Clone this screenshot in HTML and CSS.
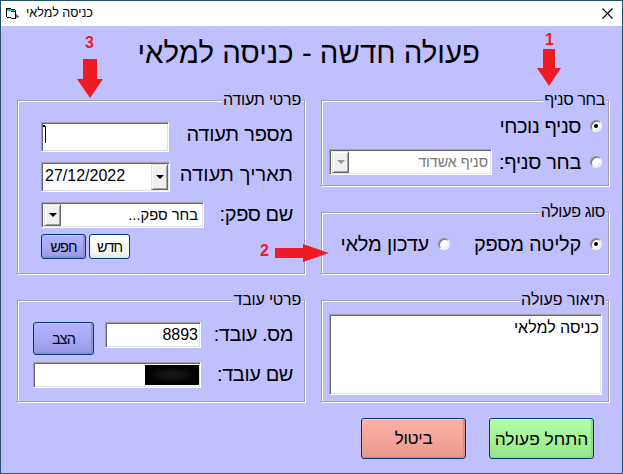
FILE: index.html
```html
<!DOCTYPE html>
<html lang="he">
<head>
<meta charset="utf-8">
<title>כניסה למלאי</title>
<link rel="stylesheet" href="styles.css">
</head>
<body>
<div class="window">
  <header class="titlebar">
    <svg class="app-icon" width="13" height="12" viewBox="0 0 13 12" shape-rendering="crispEdges">
      <path d="M0 0h5v1h4v1h1v9H5v-1H1V9H0z" fill="#000"/>
      <path d="M1 3h4v1h4v6H5V9H1z" fill="#fff"/>
      <path d="M1 1h4v1h4v1H5V3H1z" fill="#00d0d8"/>
      <path d="M10 6h1v1h1v1h1v1h-1v1h-2z" fill="#777"/>
    </svg>
    <span class="caption">כניסה למלאי</span>
    <svg class="close" width="11" height="11" viewBox="0 0 11 11"><path d="M.5 .5l10 10M10.500 .5l-10 10" stroke="#000" stroke-width="1.100"/></svg>
  </header>
  <main>
    <h1>פעולה חדשה - כניסה למלאי</h1>
    <div class="columns">
      <div class="column">
        <fieldset class="panel document">
          <div class="legend">פרטי תעודה</div>
          <div class="row tall"><div class="box number"><svg width="4" height="19" viewBox="0 0 4 19" shape-rendering="crispEdges"><path d="M0 0h2v1h1v17H2V2H0z"/></svg></div><label class="l-num">מספר תעודה</label></div>
          <div class="row tall"><div class="box date"><span>27/12/2022</span><b class="drop"></b></div><label class="l-date">תאריך תעודה</label></div>
          <div class="row"><div class="box supplier"><b class="drop"></b><span dir="rtl">בחר ספק...</span></div><label class="l-sup">שם ספק:</label></div>
          <div class="buttons"><button class="blue search">חפש</button><button class="light">חדש</button></div>
        </fieldset>
        <fieldset class="panel employee">
          <div class="legend">פרטי עובד</div>
          <div class="row emp"><button class="blue set">הצב</button><div class="box id"><span>8893</span></div><label class="l-id">מס. עובד:</label></div>
          <div class="row name-row"><div class="box name"><i class="redacted"></i></div><label class="l-name">שם עובד:</label></div>
        </fieldset>
      </div>
      <div class="column">
        <fieldset class="panel branch">
          <div class="legend l-branch">בחר סניף</div>
          <div class="opt"><label class="l-cur">סניף נוכחי</label><i class="radio on"></i></div>
          <div class="opt second"><div class="box disabled"><b class="drop"></b><span dir="rtl">סניף אשדוד</span></div><label class="l-pick">בחר סניף:</label><i class="radio"></i></div>
        </fieldset>
        <fieldset class="panel kind">
          <div class="legend l-kind">סוג פעולה</div>
          <div class="opt"><label>עדכון מלאי</label><i class="radio"></i><label class="l-recv">קליטה מספק</label><i class="radio on"></i></div>
        </fieldset>
        <fieldset class="panel about">
          <div class="legend l-about">תיאור פעולה</div>
          <div class="box memo" dir="rtl">כניסה למלאי</div>
        </fieldset>
      </div>
    </div>
    <footer><button class="big red">ביטול</button><button class="big green">התחל פעולה</button></footer>
  </main>
  <div class="note n1">1</div>
  <div class="note n2">2</div>
  <div class="note n3">3</div>
  <svg class="arrow a1" width="24" height="37" viewBox="0 0 24 37"><path d="M6 0h12v19h6L12 37 0 19h6z"/></svg>
  <svg class="arrow a2" width="54" height="18" viewBox="0 0 54 18"><path d="M0 4h28V0l26 9-26 9v-4H0z"/></svg>
  <svg class="arrow a3" width="26" height="39" viewBox="0 0 26 39"><path d="M6 0h14v20h6L13 39 0 20h6z"/></svg>
</div>
</body>
</html>
```
FILE: styles.css
```css
* { box-sizing: border-box; }
body { margin: 0; font-family: "Liberation Sans", sans-serif; color: #000; }
.window {
  position: relative;
  width: 623px;
  height: 474px;
  border: 1px solid #24506c;
  border-bottom-color: #48486a;
  background: #c0c0ff;
  overflow: hidden;
}
.titlebar { display: flex; height: 25px; background: #fff; padding: 0 9px 0 5px; }
.app-icon { margin-top: 7px; }
.caption { margin-left: 7px; font-size: 12.600px; line-height: 24px; direction: rtl; }
.close { margin: 7px 0 0 auto; }
h1 {
  height: 74px;
  margin: 0;
  padding: 9px 142px 0 0;
  font-size: 29.400px;
  font-weight: 400;
  line-height: 36px;
  direction: rtl;
  white-space: nowrap;
}
.columns { display: flex; gap: 16px; padding-left: 16px; }
.column { width: 288px; }
.panel {
  display: flex;
  flex-direction: column;
  min-width: 0;
  margin: 0;
  padding: 0;
  border: 1px solid #a0a0a0;
  box-shadow: 1px 1px 0 #fff, inset 1px 1px 0 #fff;
}
.document { height: 174px; margin-bottom: 26px; }
.employee, .about { height: 102px; }
.branch { height: 86px; margin-bottom: 26px; }
.kind { height: 62px; margin-bottom: 26px; }
.legend {
  align-self: flex-end;
  height: 16px;
  margin: -9px 2px 0 0;
  padding: 0 1px;
  font-size: 16px;
  line-height: 16px;
  letter-spacing: -.2px;
  direction: rtl;
  white-space: nowrap;
  background: #c0c0ff;
}
.l-branch, .l-kind { letter-spacing: -.35px; }
.l-about { letter-spacing: 0; }
label { font-size: 20px; line-height: 22px; letter-spacing: -.2px; direction: rtl; white-space: nowrap; }
.row { display: flex; justify-content: space-between; align-items: center; height: 26px; margin: 0 11px 0 23px; }
.row label { padding-bottom: 2px; }
.row.tall { height: 30px; margin-bottom: 10px; }
.row.tall label { padding-bottom: 6px; }
.document .legend { margin-bottom: 14px; }
.l-date { letter-spacing: .15px; }
.l-sup { letter-spacing: -.4px; }
.l-id { letter-spacing: -.45px; }
.l-name, .l-cur { letter-spacing: -.4px; }
.l-pick { letter-spacing: -.35px; }
.box {
  display: flex;
  border: 1px solid;
  border-color: #a0a0a0 #fff #fff #a0a0a0;
  box-shadow: inset 1px 1px 0 #696969, inset -1px -1px 0 #e3e3e3;
  background: #fff;
  padding: 2px;
  font-size: 16px;
  white-space: nowrap;
}
.number { width: 128px; height: 30px; padding: 2px 1px; }
.date { width: 129px; height: 30px; padding: 1px; justify-content: space-between; line-height: 22px; }
.date span { padding: 1px 0 0 2px; }
.supplier, .disabled { width: 163px; height: 26px; padding: 1px; justify-content: space-between; font-size: 14.700px; line-height: 22px; }
.disabled { margin-right: 7px; font-size: 14.300px; color: #777; }
.supplier span { padding-right: 4px; }
.disabled span { padding-right: 2px; }
.drop {
  width: 17px;
  display: grid;
  place-items: center;
  background: #f0f0f0;
  border: 1px solid;
  border-color: #e3e3e3 #696969 #696969 #e3e3e3;
  box-shadow: inset 1px 1px 0 #fff, inset -1px -1px 0 #a0a0a0;
}
.supplier .drop, .disabled .drop { margin-left: 1px; }
.drop::before { content: ""; border: 4px solid transparent; border-top-color: #000; border-bottom: 0; }
.disabled .drop::before { border-top-color: #999; }
.buttons { display: flex; gap: 3px; margin: 6px 0 0 23px; }
button {
  height: 25px;
  width: 41px;
  padding: 0;
  border: 1px solid #003c74;
  border-radius: 3px;
  font: 14.500px/22px "Liberation Sans", sans-serif;
  letter-spacing: -1px;
  color: #000;
  direction: rtl;
}
.search { width: 45px; }
.light { background: linear-gradient(#fff, #f5f5f0 80%, #e2e2da); }
.blue {
  background: linear-gradient(#b2b2ff, #a8a8f4 50%, #9898e4);
  box-shadow: inset -2px -2px 1px #8e8ed8, inset 0 1px 0 #c4c4ff;
}
.employee .legend { margin-bottom: 14px; }
.emp { margin: 0 11px 0 15px; justify-content: flex-start; align-items: flex-start; }
.emp label { margin-left: auto; padding: 1px 0 0; }
.set { width: 61px; height: 33px; }
.id { width: 96px; height: 26px; margin-left: 11px; justify-content: flex-end; line-height: 20px; }
.name-row { margin: 14px 11px 0 15px; }
.name { width: 168px; height: 26px; padding: 2px 1px; justify-content: flex-end; }
.redacted { width: 54px; height: 20px; background: radial-gradient(ellipse at center, #151515 20%, #000 65%); }
.opt { display: flex; justify-content: flex-end; align-items: center; height: 26px; margin-right: 6px; }
.opt label { margin-right: 9px; }
.radio {
  display: grid;
  place-items: center;
  width: 12px;
  height: 12px;
  border: 1px solid;
  border-color: #888 #f4f4f4 #f4f4f4 #888;
  border-radius: 50%;
  background: #fff;
  box-shadow: inset 1px 1px 0 #777, inset -1px -1px 0 #e3e3e3;
}
.radio.on::before { content: ""; width: 4px; height: 4px; border-radius: 50%; background: #000; }
.branch .opt:nth-child(2) { margin-top: 5px; }
.second { margin-top: 10px; }
.kind .opt { margin-top: 11px; }
.kind .radio:nth-child(2) { margin-right: 24px; }
.l-recv { letter-spacing: -.25px; }
.memo { width: 273px; height: 81px; margin: 6px 0 0 7px; padding: 4px 2px; line-height: 17px; }
footer { display: flex; gap: 23px; padding: 16px 0 0 360px; }
.big { width: 105px; height: 41px; font-size: 17.400px; letter-spacing: 0; }
.red { font-size: 17px; letter-spacing: -.3px; background: linear-gradient(#ffb0a6, #f4a69a 50%, #e4988c); box-shadow: inset -2px -1px 1px #d88c80, inset 0 1px 0 #ffc4bc; }
.green { background: linear-gradient(#b0ffa4, #a4f498 50%, #98e48c); box-shadow: inset -2px -1px 1px #8cd880, inset 0 1px 0 #c4ffbc; }
.note { position: absolute; color: #ed1c24; font: bold 16px/16px "Liberation Sans", sans-serif; }
.n1 { left: 544px; top: 31px; }
.n2 { left: 259px; top: 242px; }
.n3 { left: 84px; top: 34px; }
.arrow { position: absolute; fill: #ed1c24; }
.a1 { left: 536px; top: 48px; }
.a2 { left: 274px; top: 243px; }
.a3 { left: 76px; top: 58px; }
```
